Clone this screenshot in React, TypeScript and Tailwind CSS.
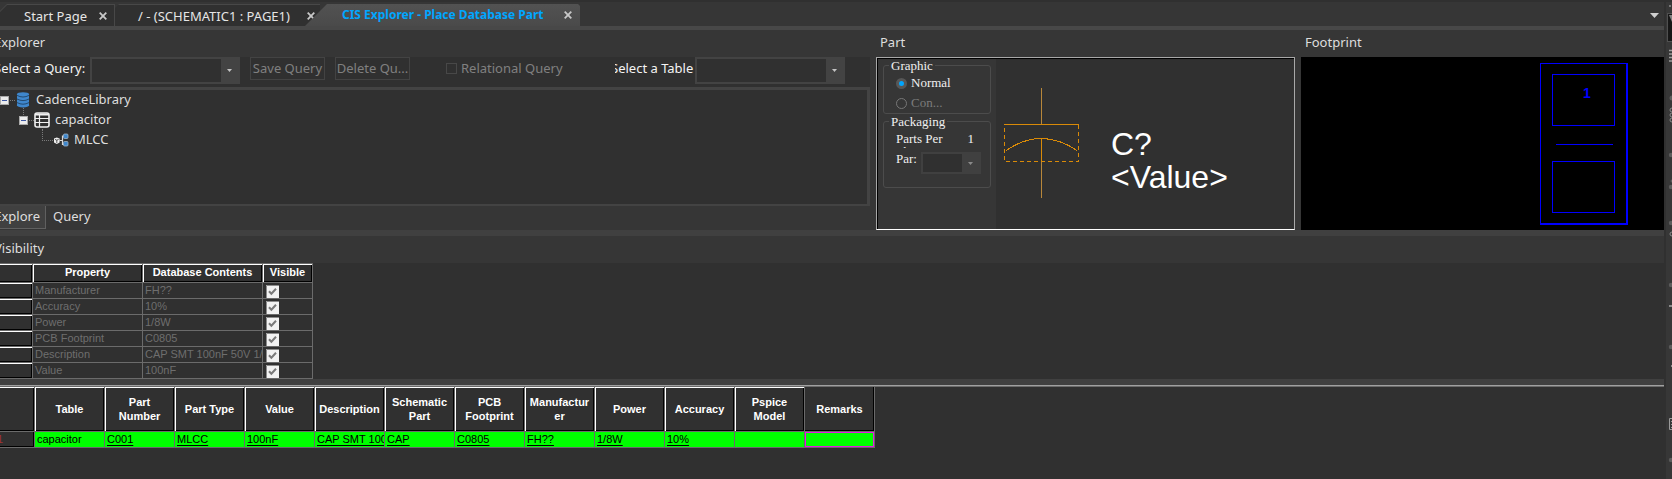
import React from "react";

type PropertyRow = { name: string; contents: string };
type GridColumn = { title: string; value: string; link?: boolean };

const properties: PropertyRow[] = [
  { name: "Manufacturer", contents: "FH??" },
  { name: "Accuracy", contents: "10%" },
  { name: "Power", contents: "1/8W" },
  { name: "PCB Footprint", contents: "C0805" },
  { name: "Description", contents: "CAP SMT 100nF 50V 1/" },
  { name: "Value", contents: "100nF" },
];

const columns: GridColumn[] = [
  { title: "Table", value: "capacitor" },
  { title: "Part Number", value: "C001", link: true },
  { title: "Part Type", value: "MLCC", link: true },
  { title: "Value", value: "100nF", link: true },
  { title: "Description", value: "CAP SMT 100", link: true },
  { title: "Schematic Part", value: "CAP", link: true },
  { title: "PCB Footprint", value: "C0805", link: true },
  { title: "Manufacturer", value: "FH??", link: true },
  { title: "Power", value: "1/8W", link: true },
  { title: "Accuracy", value: "10%", link: true },
  { title: "Pspice Model", value: "" },
  { title: "Remarks", value: "" },
];

const raised =
  "shadow-[inset_1px_1px_0_#ffffff,inset_-1px_-1px_0_#000000]";
const raisedEdge =
  "shadow-[inset_0_1px_0_#ffffff,inset_-1px_-1px_0_#000000]";
const gridLine = "border-r border-b border-[#6b6b6b]";

function CloseButton({ label }: { label: string }) {
  return (
    <button type="button" aria-label={label} className="flex h-4 w-4 items-center justify-center">
      <svg width="8" height="8" viewBox="0 0 8 8" stroke="#c8c8c8" strokeWidth="1.8" fill="none">
        <path d="M0.7 0.7 7.3 7.3M7.3 0.7 0.7 7.3" />
      </svg>
    </button>
  );
}

function Combo({ id }: { id: string }) {
  return (
    <div className="flex h-[27px] w-[150px] items-center bg-[#434343] p-[2px]">
      <select id={id} className="h-[23px] w-[129px] appearance-none bg-[#303030] outline-none" />
      <span className="flex flex-1 justify-center">
        <svg width="5" height="3" viewBox="0 0 5 3" fill="#c4c4c4">
          <path d="M0 0H5L2.5 3Z" />
        </svg>
      </span>
    </div>
  );
}

function Expander({ x, y }: { x: number; y: number }) {
  return (
    <g>
      <rect x={x + 0.5} y={y + 0.5} width="8" height="8" fill="#ececec" stroke="#a9a9a9" />
      <path d={`M${x + 2} ${y + 4.5}h5`} stroke="#3b56a0" />
    </g>
  );
}

function DatabaseNode() {
  return (
    <svg width="36" height="20" viewBox="0 0 36 20" fill="none" className="shrink-0">
      <Expander x={0} y={6} />
      <path d="M10 10.5H16" stroke="#7a7a7a" strokeDasharray="1 1" />
      <rect x="17" y="4" width="12" height="12" fill="#3f87cc" />
      <ellipse cx="23" cy="4.4" rx="6.2" ry="2.2" fill="#3f87cc" />
      <ellipse cx="23" cy="15.2" rx="6.2" ry="2.2" fill="#3f87cc" />
      <path
        d="M17 5.4Q23 8.6 29 5.4M17 9Q23 12.2 29 9M17 12.6Q23 15.8 29 12.6"
        stroke="#234a70"
        strokeWidth="1"
      />
      <path d="M23.5 18V20" stroke="#7a7a7a" strokeDasharray="1 1" />
    </svg>
  );
}

function TableNode() {
  return (
    <svg width="55" height="20" viewBox="0 0 55 20" fill="none" className="shrink-0">
      <path d="M23.5 0V5M29 10.5H34M42.5 19V20" stroke="#7a7a7a" strokeDasharray="1 1" />
      <Expander x={19} y={6} />
      <rect x="35" y="3" width="14" height="14" rx="2" fill="#303030" stroke="#f0f0f0" strokeWidth="1.6" />
      <path d="M35 4.5H49" stroke="#f0f0f0" strokeWidth="2" />
      <path d="M35 8.5H49M35 12.5H49M39.5 5V17" stroke="#f0f0f0" strokeWidth="1.2" />
    </svg>
  );
}

function PartTypeNode() {
  return (
    <svg width="74" height="20" viewBox="0 0 74 20" fill="none" className="shrink-0">
      <path d="M42.5 0V10M42 10.5H53" stroke="#7a7a7a" strokeDasharray="1 1" />
      <path d="M54 8.6 56.8 7.4 59.6 8.6V12.4L56.8 14 54 12.4Z" fill="#f0f0f0" />
      <path d="M55 9.4 56.8 10.2 58.6 9.4M56.8 10.2V13" stroke="#303030" strokeWidth="0.8" />
      <path d="M59.5 10.5H62.5M66 6H62.5V14.5H66" stroke="#d8d8d8" strokeWidth="1.2" />
      <rect x="63.5" y="4" width="4.5" height="4.5" rx="1" fill="#3f87cc" stroke="#9fb4c8" strokeWidth="0.8" />
      <rect x="63.5" y="11.5" width="4.5" height="4.5" rx="1" fill="#3f87cc" stroke="#9fb4c8" strokeWidth="0.8" />
    </svg>
  );
}

function DocumentTabs() {
  return (
    <nav className="flex h-[22px] text-[#e6e6e6]">
      <div className="flex w-[115px] shrink-0 bg-[#484848] [clip-path:polygon(0_7px,7px_0,100%_0,100%_100%,0_100%)]">
        <div className="mt-px mr-px flex flex-1 items-center justify-between bg-[#303030] pr-[3px] pl-6 [clip-path:polygon(0_7px,7px_0,100%_0,100%_100%,0_100%)]">
          <a href="#start" className="leading-[22px]">Start Page</a>
          <CloseButton label="Close Start Page" />
        </div>
      </div>
      <div className="flex w-[205px] shrink-0 items-center justify-between border-t border-[#484848] bg-[#303030] pr-px pl-[23px] [clip-path:polygon(0_4px,4px_0,100%_0,100%_100%,0_100%)]">
        <a href="#page1">/ - (SCHEMATIC1 : PAGE1)</a>
        <CloseButton label="Close PAGE1" />
      </div>
      <div className="-ml-[15px] flex w-[275px] shrink-0 items-center justify-between bg-linear-to-b from-[#525252] to-[#4a4a4a] pr-1 pl-[37px] text-xs font-bold text-[#00a6ff] [clip-path:polygon(0_100%,22px_0,273px_0,100%_2px,100%_100%)]">
        <a href="#cis" className="whitespace-nowrap">CIS Explorer - Place Database Part</a>
        <CloseButton label="Close CIS Explorer" />
      </div>
      <button type="button" aria-label="Window list" className="ml-auto flex w-5 items-center justify-center">
        <svg width="9" height="5" viewBox="0 0 9 5" fill="#cfcfcf">
          <path d="M0 0H9L4.5 5Z" />
        </svg>
      </button>
    </nav>
  );
}

function ExplorerPane() {
  return (
    <section className="flex min-w-0 flex-1 flex-col overflow-hidden pr-[6px]">
      <h2 className="-ml-[6px] h-[27px] leading-6">Explorer</h2>
      <div className="flex h-[30px] items-start bg-[#303030]">
        <label htmlFor="query" className="-ml-[6px] w-24 shrink-0 leading-[22px] text-[#f4f4f4]">
          Select a Query:
        </label>
        <Combo id="query" />
        <button type="button" disabled className="ml-[10px] h-[23px] w-[75px] shrink-0 border border-[#434343] leading-[21px] text-[#808080]">
          Save Query
        </button>
        <button type="button" disabled className="ml-[10px] h-[23px] w-[75px] shrink-0 border border-[#434343] leading-[21px] text-[#808080]">
          Delete Qu...
        </button>
        <label className="ml-9 flex h-[22px] w-[169px] shrink-0 items-center gap-1 text-[#808080]">
          <input type="checkbox" disabled className="h-[11px] w-[11px] appearance-none border border-[#484848]" />
          Relational Query
        </label>
        <div className="flex w-20 shrink-0 overflow-hidden">
          <label htmlFor="table" className="-ml-1 leading-[22px] whitespace-nowrap text-[#f4f4f4]">
            Select a Table
          </label>
        </div>
        <Combo id="table" />
      </div>
      <ul className="h-[119px] border-t-[3px] border-r-[3px] border-b-2 border-[#434343] bg-[#303030] leading-[18px]">
        <li className="flex h-5 items-start"><DatabaseNode />CadenceLibrary</li>
        <li className="flex h-5 items-start"><TableNode />capacitor</li>
        <li className="flex h-5 items-start"><PartTypeNode />MLCC</li>
      </ul>
      <div className="flex h-6 items-start">
        <button type="button" className="flex h-[23px] w-[46px] items-start justify-end border-r border-b border-[#606060] bg-[#404040] pr-[5px]">
          Explore
        </button>
        <button type="button" className="flex h-[23px] items-start px-[7px]">Query</button>
      </div>
    </section>
  );
}

function PartPane() {
  return (
    <section className="w-[425px] shrink-0 pr-[6px]">
      <h2 className="h-[27px] pl-1 leading-6">Part</h2>
      <div className="flex h-[173px] border border-[#a8a8a8] border-b-white bg-[#303030]">
        <div className="w-[119px] shrink-0 border-t border-l border-black bg-[#363636] pl-[5px] font-['Liberation_Serif',serif] text-[13px] leading-[14px] text-[#f0f0f0]">
          <fieldset className="h-[55px] w-[108px] rounded-[3px] border border-[#4c4c4c] pl-3">
            <legend className="-ml-[7px] px-[2px] leading-[13px]">Graphic</legend>
            <label className="mt-[3px] flex h-4 items-center gap-1">
              <input
                type="radio"
                name="graphic"
                defaultChecked
                className="h-[11px] w-[11px] appearance-none rounded-full border-[3px] border-[#575757] bg-[#00a6ff]"
              />
              Normal
            </label>
            <label className="mt-1 flex h-4 items-center gap-1 text-[#7c7c7c]">
              <input
                type="radio"
                name="graphic"
                disabled
                className="h-[11px] w-[11px] appearance-none rounded-full border border-[#777777]"
              />
              Con...
            </label>
          </fieldset>
          <fieldset className="mt-px h-[73px] w-[108px] rounded-[3px] border border-[#4c4c4c] pl-3">
            <legend className="-ml-[7px] px-[2px] leading-[13px]">Packaging</legend>
            <div className="mt-1 flex h-4 justify-between overflow-hidden pr-4 leading-[13px]">
              <span className="w-[60px]">
                Parts Per
                <br />
                Pkg:
              </span>
              <span>1</span>
            </div>
            <div className="mt-1 flex items-start">
              <label htmlFor="part" className="w-[25px]">Par:</label>
              <div className="flex h-[22px] w-[60px] items-center bg-[#404040] p-[2px]">
                <select id="part" disabled className="h-[18px] w-[39px] appearance-none bg-[#303030]" />
                <span className="flex flex-1 justify-center">
                  <svg width="5" height="3" viewBox="0 0 5 3" fill="#8a8a8a">
                    <path d="M0 0H5L2.5 3Z" />
                  </svg>
                </span>
              </div>
            </div>
          </fieldset>
        </div>
        <div className="flex-1 border-t border-black">
          <svg width="297" height="169" viewBox="996 59 297 169" fill="none" shapeRendering="crispEdges">
            <path d="M1041.5 88V124M1041.5 138V198" stroke="#b8873a" />
            <path d="M1004 124.5H1079M1041.5 138V162" stroke="#d98a08" />
            <path d="M1004.5 128V161.5H1078.5V125" stroke="#d98a08" strokeDasharray="4 3" />
            <path d="M1006 150.5Q1041.5 126.5 1077 150.5" stroke="#d98a08" />
            <g fill="#ffffff" fontFamily="Liberation Sans, sans-serif" fontSize="32" shapeRendering="auto">
              <text x="1111" y="155">C?</text>
              <text x="1111" y="188">&lt;Value&gt;</text>
            </g>
          </svg>
        </div>
      </div>
    </section>
  );
}

function FootprintPane() {
  return (
    <section className="w-[363px] shrink-0">
      <h2 className="h-[27px] pl-1 leading-6">Footprint</h2>
      <div className="h-[173px] bg-black">
        <svg width="363" height="173" viewBox="1301 57 363 173" fill="none" stroke="#0000ff" shapeRendering="crispEdges">
          <path d="M1540.5 224V63.5H1627" />
          <path d="M1627 63V224H1540" strokeWidth="2" />
          <rect x="1552.5" y="74.5" width="62" height="51" />
          <path d="M1556 144.5H1613" />
          <rect x="1552.5" y="161.5" width="62" height="51" />
          <text
            x="1583"
            y="98"
            fill="#0000ff"
            stroke="none"
            fontFamily="Liberation Sans, sans-serif"
            fontSize="14"
            fontWeight="bold"
          >
            1
          </text>
        </svg>
      </div>
    </section>
  );
}

function VisibilityTable() {
  return (
    <table className="w-[313px] table-fixed border-separate border-spacing-0 border-t border-[#6b6b6b] font-['Liberation_Sans',Arial,sans-serif] text-[11px] leading-[14px] text-[#6e6e6e]">
      <colgroup>
        <col className="w-[33px]" />
        <col className="w-[110px]" />
        <col className="w-[120px]" />
        <col className="w-[50px]" />
      </colgroup>
      <thead>
        <tr className="h-[19px] text-white">
          {["", "Property", "Database Contents", "Visible"].map((title) => (
            <th key={title} className={`${gridLine} ${title ? raised : raisedEdge} p-0 pb-[2px]`}>{title}</th>
          ))}
        </tr>
      </thead>
      <tbody>
        {properties.map((row) => (
          <tr key={row.name} className="h-4 align-top">
            <td className={`${gridLine} ${raisedEdge} p-0`} />
            <td className={`${gridLine} p-0 pl-[2px] whitespace-nowrap`}>{row.name}</td>
            <td className={`${gridLine} overflow-hidden p-0 pl-[2px] whitespace-nowrap`}>{row.contents}</td>
            <td className={`${gridLine} p-0 pl-[3px]`}>
              <label className="flex h-[15px] items-end" aria-label={row.name}>
                <input type="checkbox" defaultChecked className="sr-only" />
                <svg width="13" height="13" viewBox="0 0 13 13" fill="none">
                  <rect width="13" height="13" fill="#f2f2f2" />
                  <path d="M0.5 13V0.5H13" stroke="#8c8c8c" />
                  <path d="M3 6.2 5.4 8.8 10 3.8" stroke="#7a7a7a" strokeWidth="2" />
                </svg>
              </label>
            </td>
          </tr>
        ))}
      </tbody>
    </table>
  );
}

function PartsGrid() {
  return (
    <table className="w-[875px] table-fixed border-separate border-spacing-0 font-['Liberation_Sans',Arial,sans-serif] text-[11px] leading-[14px]">
      <colgroup>
        <col className="w-[35px]" />
        {columns.map((column) => (
          <col key={column.title} className="w-[70px]" />
        ))}
      </colgroup>
      <thead>
        <tr className="h-[45px] text-white">
          <th className={`${gridLine} ${raisedEdge} p-0`} />
          {columns.map((column) => (
            <th
              key={column.title}
              className={`${gridLine} ${
                column.title === "Remarks" ? "shadow-[inset_-1px_-1px_0_#000000]" : raised
              } px-[3px] pt-0 pb-px wrap-break-word`}
            >
              {column.title}
            </th>
          ))}
        </tr>
      </thead>
      <tbody>
        <tr className="h-4 align-top">
          <td className={`${gridLine} p-0 text-[#a03030] shadow-[inset_-1px_-1px_0_#000000]`}>
            <div className="-ml-[3px]">1</div>
          </td>
          {columns.map((column) => (
            <td
              key={column.title}
              className={`${gridLine} overflow-hidden bg-[#00ff00] p-0 pl-[2px] whitespace-nowrap text-black ${
                column.title === "Remarks" ? "shadow-[inset_0_0_0_1px_#e815e8]" : ""
              }`}
            >
              {column.link ? (
                <a href={`#${column.value}`} className="underline underline-offset-2">{column.value}</a>
              ) : (
                column.value
              )}
            </td>
          ))}
        </tr>
      </tbody>
    </table>
  );
}

function ToolStrip() {
  return (
    <aside className="w-2 shrink-0 border-l-2 border-[#303030] bg-[#373737]">
      <svg width="6" height="479" viewBox="1666 0 6 479" fill="none">
        <rect x="1666" width="6" height="2" fill="#303030" />
        <rect x="1669" y="5" width="2" height="2" fill="#777777" />
        <rect x="1667.5" y="13.5" width="6" height="28" fill="#171717" stroke="#505050" />
        <path d="M1669 15H1672V22Z" fill="#808080" />
        <path d="M1669 50.5H1672M1669 54H1672M1669 57.5H1672M1669 61H1672" stroke="#9a9a9a" strokeWidth="1.5" />
        <g stroke="#8a8a8a">
          <circle cx="1672" cy="110" r="2" />
          <circle cx="1672" cy="115" r="2" />
          <circle cx="1672" cy="120" r="2" />
          <circle cx="1672" cy="234" r="2" />
        </g>
        <g fill="#5c5c5c">
          <circle cx="1672" cy="98" r="2.5" />
          <circle cx="1671" cy="155" r="2.2" />
          <circle cx="1672" cy="181" r="1.5" />
          <circle cx="1671" cy="187" r="2.2" />
          <circle cx="1671" cy="223" r="2.2" />
          <circle cx="1671" cy="285" r="2.2" />
          <circle cx="1671" cy="347" r="2.2" />
          <circle cx="1671" cy="460" r="2.2" />
        </g>
        <path d="M1669 306H1672M1671 366H1672" stroke="#8a8a8a" strokeWidth="2" />
        <path d="M1672 418.5H1669.5V429.5H1672M1671 421.5H1672M1671 424.5H1672M1671 427.5H1672" stroke="#9a9a9a" />
      </svg>
    </aside>
  );
}

export default function App() {
  return (
    <div className="flex min-h-screen overflow-hidden bg-[#303030] font-['Noto_Sans','Noto_Sans_CJK_SC',sans-serif] text-[13px] leading-5 text-[#dedede]">
      <main className="flex min-w-0 flex-1 flex-col">
        <header className="border-t-2 border-b-4 border-t-[#303030] border-b-[#484848] bg-[#363636] pt-[2px]">
          <DocumentTabs />
        </header>
        <div className="flex bg-[#363636]">
          <ExplorerPane />
          <PartPane />
          <FootprintPane />
        </div>
        <section className="overflow-hidden border-t-[6px] border-[#404040]">
          <h2 className="h-[27px] bg-[#363636] leading-6">
            <span className="-ml-[6px]">Visibility</span>
          </h2>
          <VisibilityTable />
        </section>
        <section className="flex-1 border-t-[6px] border-[#404040]">
          <div className="h-px bg-[#a0a0a0]" />
          <div className="h-px bg-[#6b6b6b]" />
          <PartsGrid />
        </section>
      </main>
      <ToolStrip />
    </div>
  );
}
